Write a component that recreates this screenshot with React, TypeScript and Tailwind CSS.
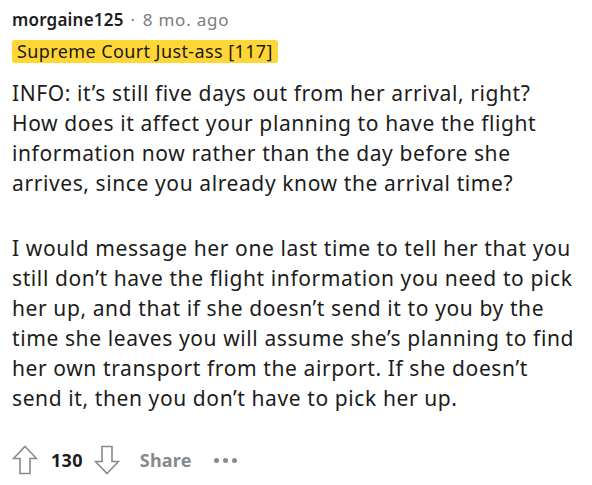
import React from 'react';

const paragraphs = [
  'INFO: it’s still five days out from her arrival, right? How does it affect your planning to have the flight information now rather than the day before she arrives, since you already know the arrival time?',
  'I would message her one last time to tell her that you still don’t have the flight information you need to pick her up, and that if she doesn’t send it to you by the time she leaves you will assume she’s planning to find her own transport from the airport. If she doesn’t send it, then you don’t have to pick her up.',
];

function UpArrow() {
  return (
    <svg width="26" height="30" viewBox="0 0 26 30" fill="none">
      <path d="M13 1.5 L24.5 13.5 H18 V28.5 H8 V13.5 H1.5 Z" stroke="#878a8c" strokeWidth="1.6" strokeLinejoin="miter" />
    </svg>
  );
}

function DownArrow() {
  return (
    <svg width="26" height="30" viewBox="0 0 26 30" fill="none">
      <path d="M13 28.5 L24.5 16.5 H18 V1.5 H8 V16.5 H1.5 Z" stroke="#878a8c" strokeWidth="1.6" strokeLinejoin="miter" />
    </svg>
  );
}

export default function App() {
  return (
    <div className="w-[592px] h-[485px] bg-white px-3 pt-[8px] font-['Noto_Sans',sans-serif] overflow-hidden">
      <div className="flex items-center text-[17px] leading-[24px] tracking-[0.5px]">
        <span className="font-semibold text-[#1c1c1c] tracking-[0.2px]">morgaine125</span>
        <span className="ml-[7px] text-[#7c7c7c]">·</span>
        <span className="ml-[7px] text-[#7c7c7c] tracking-[0.8px]">8 mo. ago</span>
      </div>
      <div className="mt-[8px] flex">
        <span className="bg-[#ffd635] text-[#1a1a1a] text-[18px] leading-[23px] tracking-[0.4px] px-[5px] rounded-[3px]">
          Supreme Court Just-ass [117]
        </span>
      </div>
      <div className="mt-[15px] text-[21px] leading-[30px] tracking-[0.6px] text-[#1c1c1c]">
        <p>{paragraphs[0]}</p>
        <p className="mt-[35px]">{paragraphs[1]}</p>
      </div>
      <div className="mt-[32px] flex items-center">
        <UpArrow />
        <span className="ml-[13px] text-[18px] font-bold text-[#1c1c1c] tracking-[0.3px]">130</span>
        <span className="ml-[11px] flex"><DownArrow /></span>
        <span className="ml-[20px] text-[18px] font-bold text-[#878a8c] tracking-[0.2px]">Share</span>
        <span className="ml-[22px] flex gap-[4px]">
          <span className="w-[5px] h-[5px] rounded-full bg-[#878a8c]" />
          <span className="w-[5px] h-[5px] rounded-full bg-[#878a8c]" />
          <span className="w-[5px] h-[5px] rounded-full bg-[#878a8c]" />
        </span>
      </div>
    </div>
  );
}
